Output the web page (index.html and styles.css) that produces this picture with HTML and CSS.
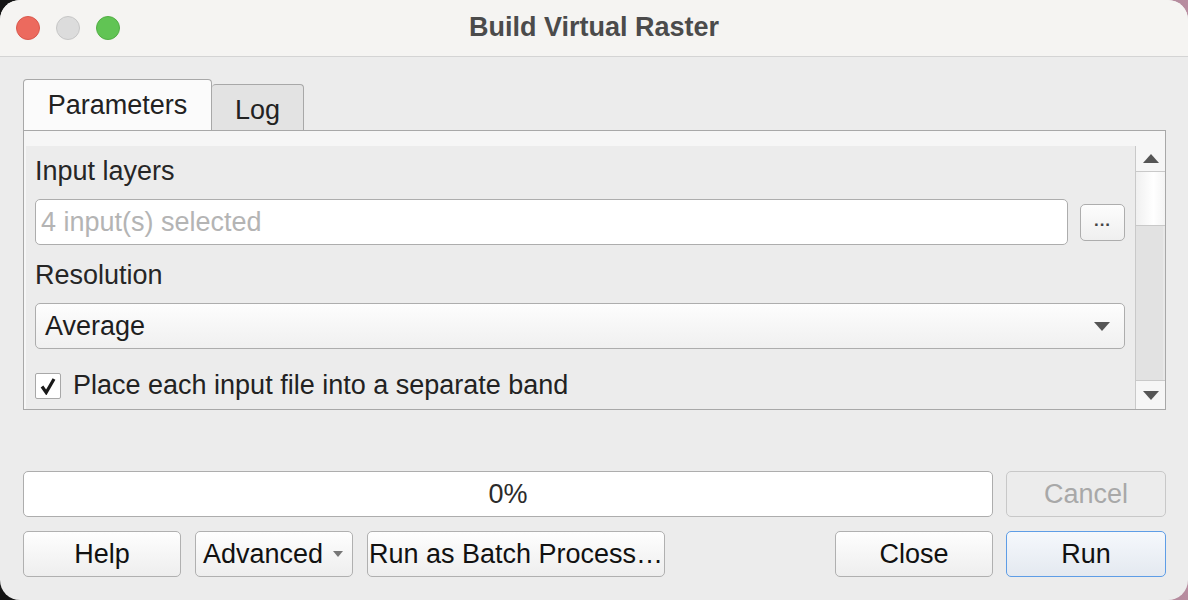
FILE: index.html
```html
<!DOCTYPE html>
<html>
<head>
<meta charset="utf-8">
<link rel="stylesheet" href="styles.css">
</head>
<body>
<div class="window">
  <div class="titlebar">
    <div class="lights">
      <span class="light red"></span>
      <span class="light gray"></span>
      <span class="light green"></span>
    </div>
    <div class="title">Build Virtual Raster</div>
  </div>
  <div class="content">
    <div class="tabs">
      <div class="tab active">Parameters</div>
      <div class="tab">Log</div>
      <div class="tab-fill"></div>
    </div>
    <div class="pane">
      <div class="scrollarea">
        <div class="form">
          <div class="label">Input layers</div>
          <div class="field-row">
            <div class="textfield">4 input(s) selected</div>
            <div class="dots-btn">...</div>
          </div>
          <div class="label label-res">Resolution</div>
          <div class="combo">
            <span>Average</span>
            <svg class="combo-arrow" width="16" height="9" viewBox="0 0 16 9"><path d="M0 0 H16 L8 9 Z" fill="#555"/></svg>
          </div>
          <div class="check-row">
            <span class="checkbox">
              <svg width="18" height="18" viewBox="0 0 18 18"><path d="M3 9.5 L7.2 15.5 L15 2" fill="none" stroke="#1a1a1a" stroke-width="3.2"/></svg>
            </span>
            <span class="check-label">Place each input file into a separate band</span>
          </div>
        </div>
        <div class="scrollbar">
          <div class="sb-btn">
            <svg width="16" height="9" viewBox="0 0 16 9"><path d="M0 9 H16 L8 0 Z" fill="#555"/></svg>
          </div>
          <div class="sb-handle"></div>
          <div class="sb-trough"></div>
          <div class="sb-btn sb-down">
            <svg width="16" height="9" viewBox="0 0 16 9"><path d="M0 0 H16 L8 9 Z" fill="#555"/></svg>
          </div>
        </div>
      </div>
    </div>
    <div class="progress-row">
      <div class="progress">0%</div>
      <div class="btn btn-disabled">Cancel</div>
    </div>
    <div class="button-row">
      <div class="btn btn-std">Help</div>
      <div class="btn btn-std btn-adv">Advanced
        <svg width="10" height="6" viewBox="0 0 10 6"><path d="M0 0 H10 L5 6 Z" fill="#777"/></svg>
      </div>
      <div class="btn btn-batch">Run as Batch Process…</div>
      <div class="spacer"></div>
      <div class="btn btn-std">Close</div>
      <div class="btn btn-run">Run</div>
    </div>
  </div>
</div>
</body>
</html>
```
FILE: styles.css
```css
* { box-sizing: border-box; }
html, body {
  margin: 0;
  padding: 0;
  width: 1188px;
  height: 600px;
  background: linear-gradient(90deg, #151515 0%, #2a2a2a 60%, #b88da0 100%);
  overflow: hidden;
}
body {
  font-family: "Liberation Sans", Arial, sans-serif;
  font-size: 27px;
  color: #222;
}
.window {
  width: 1188px;
  height: 600px;
  border-radius: 20px;
  overflow: hidden;
  background: #ececec;
  display: flex;
  flex-direction: column;
}
.titlebar {
  height: 57px;
  flex: none;
  background: #f5f4f2;
  border-bottom: 1px solid #d4d4d4;
  display: flex;
  align-items: center;
  justify-content: center;
  position: relative;
}
.lights {
  position: absolute;
  left: 16px;
  top: 16px;
  display: flex;
  gap: 16px;
}
.light {
  width: 24px;
  height: 24px;
  border-radius: 50%;
  display: block;
}
.red { background: #ec6a5e; border: 1px solid #d9584d; }
.gray { background: #dcdcdc; border: 1px solid #c6c6c6; }
.green { background: #61c454; border: 1px solid #52ae45; }
.title {
  font-weight: bold;
  font-size: 27px;
  color: #4b4b4b;
  margin-top: -2px;
}
.content {
  flex: 1;
  padding: 22px 22px 0 23px;
  display: flex;
  flex-direction: column;
}
.tabs {
  display: flex;
  align-items: flex-end;
  height: 52px;
  flex: none;
}
.tab {
  height: 47px;
  border: 1px solid #a8a8a8;
  border-bottom: none;
  border-radius: 4px 4px 0 0;
  background: #e3e3e3;
  display: flex;
  align-items: center;
  justify-content: center;
  color: #222;
}
.tab.active {
  height: 52px;
  background: #fbfbfb;
  width: 189px;
}
.tab:not(.active) {
  border-left: none;
  width: 92px;
  padding-top: 4px;
}
.tab-fill {
  flex: 1;
  border-bottom: 1px solid #a8a8a8;
  align-self: stretch;
}
.pane {
  height: 280px;
  flex: none;
  border: 1px solid #a8a8a8;
  margin-top: -1px;
  background: #f6f6f6;
  padding: 15px 0 0 2px;
  width: 1143px;
}
.scrollarea {
  height: 100%;
  display: flex;
  background: #ececec;
}
.form {
  flex: 1;
  padding: 10px 10px 0 9px;
  display: flex;
  flex-direction: column;
}
.label {
  height: 30px;
  line-height: 30px;
  color: #262626;
}
.label-res { margin-top: 15px; }
.field-row {
  display: flex;
  align-items: center;
  margin-top: 13px;
  gap: 12px;
}
.textfield {
  flex: 1;
  height: 46px;
  background: #fff;
  border: 1px solid #adadad;
  border-radius: 5px;
  padding-left: 5px;
  display: flex;
  align-items: center;
  color: #b4b4b4;
}
.dots-btn {
  width: 45px;
  height: 37px;
  border: 1px solid #adadad;
  border-radius: 5px;
  background: linear-gradient(#fdfdfd, #efefef);
  font-size: 17px;
  font-weight: bold;
  letter-spacing: 1px;
  display: flex;
  align-items: center;
  justify-content: center;
  padding-bottom: 2px;
  color: #444;
}
.combo {
  margin-top: 13px;
  height: 46px;
  border: 1px solid #adadad;
  border-radius: 5px;
  background: linear-gradient(#fdfdfd, #f0f0f0);
  display: flex;
  align-items: center;
  justify-content: space-between;
  padding: 0 14px 0 9px;
  color: #1e1e1e;
}
.check-row {
  margin-top: 21px;
  display: flex;
  align-items: center;
  gap: 12px;
}
.checkbox {
  width: 26px;
  height: 26px;
  border: 1px solid #a8a8a8;
  border-radius: 2px;
  background: #fff;
  display: flex;
  align-items: center;
  justify-content: center;
}
.check-label { color: #222; }
.scrollbar {
  width: 30px;
  flex: none;
  border-left: 1px solid #c9c9c9;
  display: flex;
  flex-direction: column;
  background: #f3f3f3;
}
.sb-btn {
  height: 26px;
  display: flex;
  align-items: center;
  justify-content: center;
  border-bottom: 1px solid #c9c9c9;
  background: #f6f6f6;
}
.sb-down {
  height: 29px;
  border-bottom: none;
  border-top: 1px solid #c9c9c9;
}
.sb-handle {
  height: 54px;
  background: linear-gradient(90deg, #f0f0f0, #ffffff 60%, #f4f4f4);
  border-bottom: 1px solid #c9c9c9;
}
.sb-trough {
  flex: 1;
  background: #e2e2e2;
  border-right: 2px solid #e8e8e8;
}
.progress-row {
  margin-top: 61px;
  display: flex;
  gap: 13px;
  width: 1143px;
}
.progress {
  width: 970px;
  height: 46px;
  background: #fff;
  border: 1px solid #adadad;
  border-radius: 5px;
  display: flex;
  align-items: center;
  justify-content: center;
  color: #2b2b2b;
}
.btn {
  height: 46px;
  border: 1px solid #b0b0b0;
  border-radius: 5px;
  background: linear-gradient(#fefefe, #eeeeee);
  display: flex;
  align-items: center;
  justify-content: center;
  color: #111;
}
.btn-disabled {
  width: 160px;
  background: #ececec;
  border-color: #c8c8c8;
  color: #a8a8a8;
}
.button-row {
  margin-top: 14px;
  display: flex;
  gap: 14px;
  width: 1143px;
}
.btn-std { width: 158px; }
.btn-adv {
  justify-content: flex-start;
  padding-left: 7px;
  gap: 10px;
}
.btn-batch { width: 298px; }
.spacer { flex: 1; }
.btn-run {
  width: 160px;
  margin-left: -1px;
  border-color: #5e9de6;
  background: linear-gradient(#f5f8fc, #e4e9f0);
}
```
